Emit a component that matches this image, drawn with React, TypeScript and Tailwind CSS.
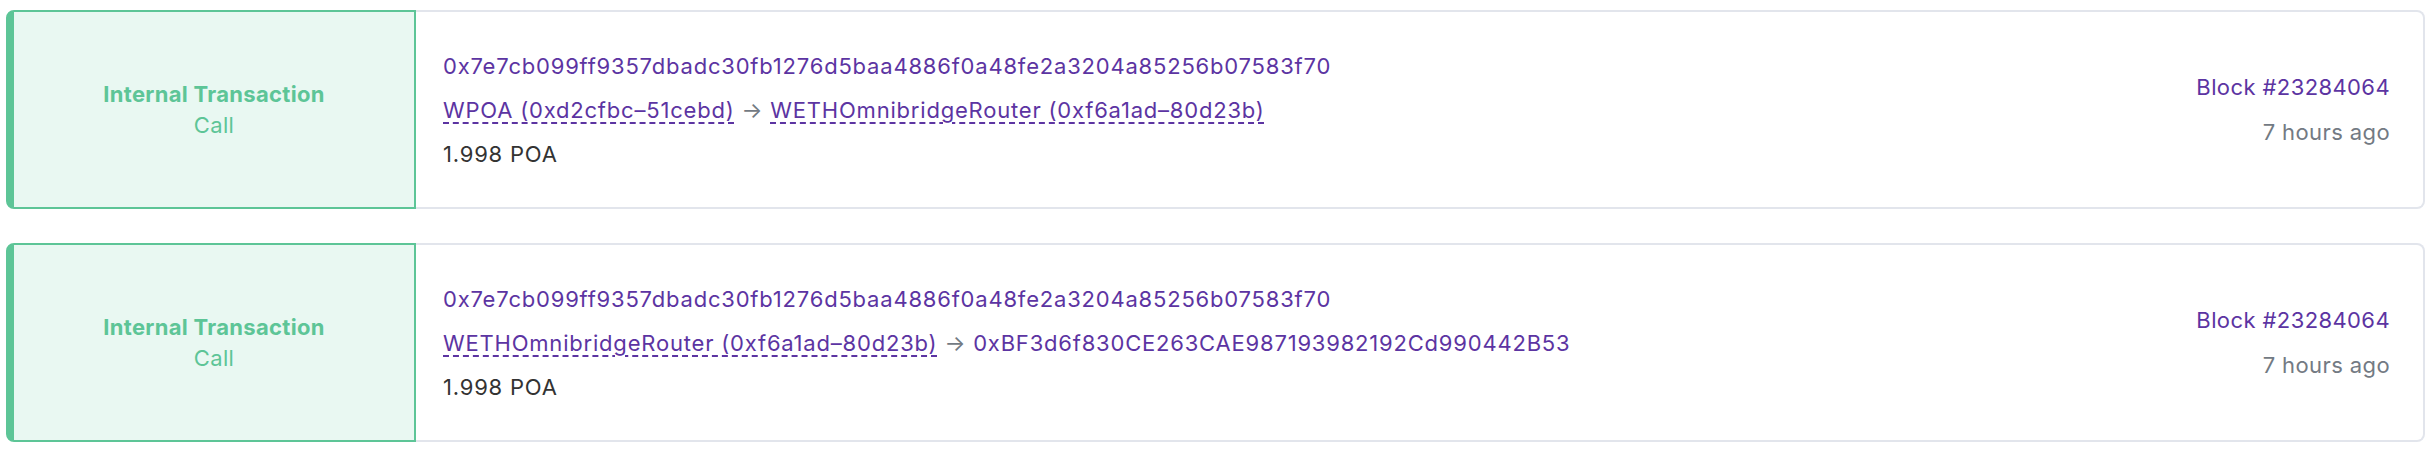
type Addr = { label: string; link: boolean };

type Row = {
  hash: string;
  from: Addr;
  to: Addr;
  value: string;
  block: string;
  age: string;
};

const rows: Row[] = [
  {
    hash: "0x7e7cb099ff9357dbadc30fb1276d5baa4886f0a48fe2a3204a85256b07583f70",
    from: { label: "WPOA (0xd2cfbc–51cebd)", link: true },
    to: { label: "WETHOmnibridgeRouter (0xf6a1ad–80d23b)", link: true },
    value: "1.998 POA",
    block: "Block #23284064",
    age: "7 hours ago",
  },
  {
    hash: "0x7e7cb099ff9357dbadc30fb1276d5baa4886f0a48fe2a3204a85256b07583f70",
    from: { label: "WETHOmnibridgeRouter (0xf6a1ad–80d23b)", link: true },
    to: { label: "0xBF3d6f830CE263CAE987193982192Cd990442B53", link: false },
    value: "1.998 POA",
    block: "Block #23284064",
    age: "7 hours ago",
  },
];

function AddressLink({ addr }: { addr: Addr }) {
  if (!addr.link) {
    return <a className="text-[#5c34a2]">{addr.label}</a>;
  }
  return (
    <a className="text-[#5c34a2] underline decoration-dashed decoration-[#5c34a2] decoration-[1.5px] underline-offset-[5px]">
      {addr.label}
    </a>
  );
}

function InternalTxTile({ row }: { row: Row }) {
  return (
    <div className="flex h-[199px]">
      {/* Type label */}
      <div className="flex w-[410px] shrink-0 flex-col items-center justify-center rounded-l-[8px] border-2 border-l-8 border-[#5dc597] bg-[#e9f8f2] text-[#5dc597] leading-[31px] tracking-[0.3px]">
        <span className="font-bold">Internal Transaction</span>
        <span>Call</span>
      </div>
      {/* Body */}
      <div className="flex flex-1 items-center rounded-r-[8px] border-2 border-l-0 border-[#e2e5ec] pl-[27px] pr-[33px]">
        <div className="flex flex-1 flex-col leading-[44px] tracking-[0.8px]">
          <a className="text-[#5c34a2]">{row.hash}</a>
          <div>
            <AddressLink addr={row.from} />
            <span className="text-[#737a83]"> → </span>
            <AddressLink addr={row.to} />
          </div>
          <span className="text-[#333333]">{row.value}</span>
        </div>
        <div className="flex flex-col items-end leading-[45px] tracking-[0.4px]">
          <a className="text-[#5c34a2]">{row.block}</a>
          <span className="text-[#737a83]">{row.age}</span>
        </div>
      </div>
    </div>
  );
}

export default function App() {
  return (
    <section className="bg-white pt-[10px] pl-[6px] pr-[9px] text-[22px] font-['Inter',sans-serif]">
      <div className="flex flex-col gap-[34px]">
        {rows.map((row, i) => (
          <InternalTxTile key={i} row={row} />
        ))}
      </div>
    </section>
  );
}
